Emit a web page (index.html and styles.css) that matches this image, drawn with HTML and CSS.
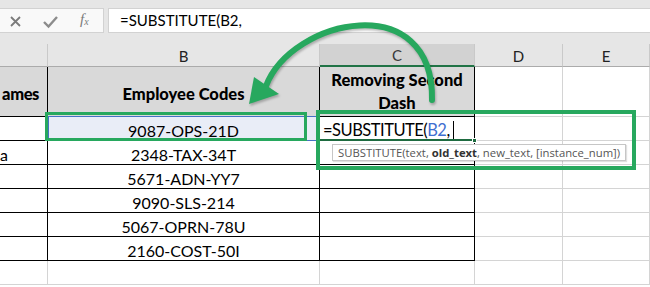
FILE: index.html
```html
<!DOCTYPE html>
<html>
<head>
<meta charset="utf-8">
<link rel="stylesheet" href="styles.css">
</head>
<body>
<div class="app">
  <div class="fbar">
    <div class="fb-left">
      <svg class="fb-icon" width="104" height="25" viewBox="0 0 104 25">
        <path d="M11 9 L20 18 M20 9 L11 18" stroke="#7b7b7b" stroke-width="1.8" fill="none"/>
        <path d="M44 14 L48.5 18.5 L57 9" stroke="#8c8c8c" stroke-width="2.4" fill="none"/>
      </svg>
      <span class="fx">f<sub>x</sub></span>
    </div>
    <div class="fb-input">=SUBSTITUTE(B2,</div>
  </div>

  <div class="sheet">
    <div class="hd hd-a"></div>
    <div class="hd">B</div>
    <div class="hd hd-sel">C</div>
    <div class="hd">D</div>
    <div class="hd">E</div>

    <div class="c tb th th-a">ames</div>
    <div class="c tb th">Employee Codes</div>
    <div class="c tb th th-c">Removing Second Dash</div>
    <div class="c"></div>
    <div class="c"></div>

    <div class="c tb"></div>
    <div class="c tb val ref">9087-OPS-21D</div>
    <div class="c tb edit">
      <span class="ftext">=SUBSTITUTE(<span class="blue">B2</span>,</span><span class="caret"></span>
      <span class="handle"></span>
    </div>
    <div class="c"></div>
    <div class="c"></div>

    <div class="c tb val val-a">a</div>
    <div class="c tb val">2348-TAX-34T</div>
    <div class="c tb"></div>
    <div class="c"></div>
    <div class="c"></div>

    <div class="c tb"></div>
    <div class="c tb val">5671-ADN-YY7</div>
    <div class="c tb"></div>
    <div class="c"></div>
    <div class="c"></div>

    <div class="c tb"></div>
    <div class="c tb val">9090-SLS-214</div>
    <div class="c tb"></div>
    <div class="c"></div>
    <div class="c"></div>

    <div class="c tb"></div>
    <div class="c tb val">5067-OPRN-78U</div>
    <div class="c tb"></div>
    <div class="c"></div>
    <div class="c"></div>

    <div class="c tb"></div>
    <div class="c tb val">2160-COST-50I</div>
    <div class="c tb"></div>
    <div class="c"></div>
    <div class="c"></div>

    <div class="c"></div>
    <div class="c"></div>
    <div class="c"></div>
    <div class="c"></div>
    <div class="c"></div>
  </div>

  <div class="tooltip">SUBSTITUTE(text, <b>old_text</b>, new_text, [instance_num])</div>
  <div class="mark mark-b"></div>
  <div class="mark mark-c"></div>

  <svg class="arrow" width="650" height="287" viewBox="0 0 650 287">
    <path d="M432 100 C434 -12 292 18 266 86" stroke="#27a85e" stroke-width="6" fill="none" stroke-linecap="round"/>
    <polygon points="249,104 254,77 279,94" fill="#27a85e"/>
  </svg>
</div>
</body>
</html>
```

FILE: styles.css
```css
* { box-sizing: border-box; }
body { margin: 0; background: #fff; }
.app {
  position: relative;
  width: 650px;
  height: 287px;
  overflow: hidden;
  font-family: Lato, "Liberation Sans", sans-serif;
  color: #000;
}
.fbar {
  height: 44px;
  background: #e6e6e6;
  display: flex;
  gap: 4px;
  padding-top: 8px;
}
.fb-left {
  position: relative;
  width: 104px;
  height: 25px;
  background: #f9f9f9;
  border: 1px solid #d2d2d2;
  border-left: none;
}
.fb-icon { position: absolute; left: 0; top: -1px; }
.fx {
  position: absolute;
  left: 80px;
  top: 2px;
  font-family: "Liberation Serif", serif;
  font-style: italic;
  font-size: 15px;
  color: #7b7b7b;
}
.fx sub { font-size: 10px; vertical-align: -1px; }
.fb-input {
  flex: 1;
  height: 25px;
  background: #fff;
  border: 1px solid #d2d2d2;
  border-right: none;
  font-size: 15px;
  line-height: 23px;
  padding-left: 11px;
}
.sheet {
  display: grid;
  grid-template-columns: 48px 272px 155px 88px 87px;
  grid-template-rows: 23px 50px repeat(7, 24px) 1fr;
  height: 243px;
}
.hd {
  background: #e6e6e6;
  border-right: 1px solid #c9c9c9;
  border-bottom: 1px solid #ababab;
  display: flex;
  align-items: center;
  justify-content: center;
  font-size: 15px;
  color: #222;
  padding-top: 1px;
}
.hd-sel {
  background: #d2d2d2;
  border-bottom: 2px solid #217346;
  color: #3a3a3a;
}
.c {
  border-right: 1px solid #d4d4d4;
  border-bottom: 1px solid #d4d4d4;
  display: flex;
  align-items: center;
  justify-content: center;
  font-size: 16px;
  white-space: nowrap;
}
.tb {
  border-right-color: #000;
  border-bottom-color: #000;
}
.th {
  background: #d9d9d9;
  font-weight: 900;
  font-size: 16.5px;
  padding-top: 4px;
}
.th-a {
  justify-content: flex-end;
  padding-right: 8px;
  padding-left: 0;
  letter-spacing: -0.4px;
}
.th-c {
  white-space: normal;
  text-align: center;
  line-height: 23px;
  padding: 0 4px;
}
.val { padding-top: 4px; }
.val-a { justify-content: flex-start; }
.ref {
  position: relative;
  background: #e9edf7;
}
.ref::after {
  content: "";
  position: absolute;
  top: -1px;
  left: 0;
  right: -1px;
  bottom: -1px;
  border: 1px solid #4472c4;
}
.edit {
  position: relative;
  justify-content: flex-start;
  padding-left: 3px;
  padding-top: 4px;
  font-size: 16.5px;
  letter-spacing: -0.5px;
  border-bottom: 2px solid #1e6b40;
}
.blue { color: #3f6fd0; }
.caret {
  display: inline-block;
  width: 1px;
  height: 18px;
  background: #000;
  margin-left: 3px;
}
.handle {
  position: absolute;
  right: -3px;
  bottom: -4px;
  width: 5px;
  height: 5px;
  background: #1e6b40;
  border: 1px solid #fff;
}
.tooltip {
  position: absolute;
  left: 332px;
  top: 144px;
  width: 294px;
  height: 17px;
  background: #fff;
  border: 1px solid #c6c6c6;
  box-shadow: 1px 1px 1px rgba(0,0,0,0.12);
  font-family: "Open Sans", sans-serif;
  font-size: 11.3px;
  line-height: 15px;
  color: #555;
  padding-left: 5px;
  white-space: nowrap;
}
.tooltip b { color: #333; }
.mark {
  position: absolute;
  border: 3.5px solid #27a85e;
}
.mark-b { left: 45px; top: 112px; width: 262px; height: 29px; }
.mark-c { left: 316px; top: 110px; width: 320px; height: 60px; border-width: 4px; }
.arrow {
  position: absolute;
  left: 0;
  top: 0;
  pointer-events: none;
  filter: drop-shadow(1px 2px 1px rgba(0,0,0,0.25));
}
```
